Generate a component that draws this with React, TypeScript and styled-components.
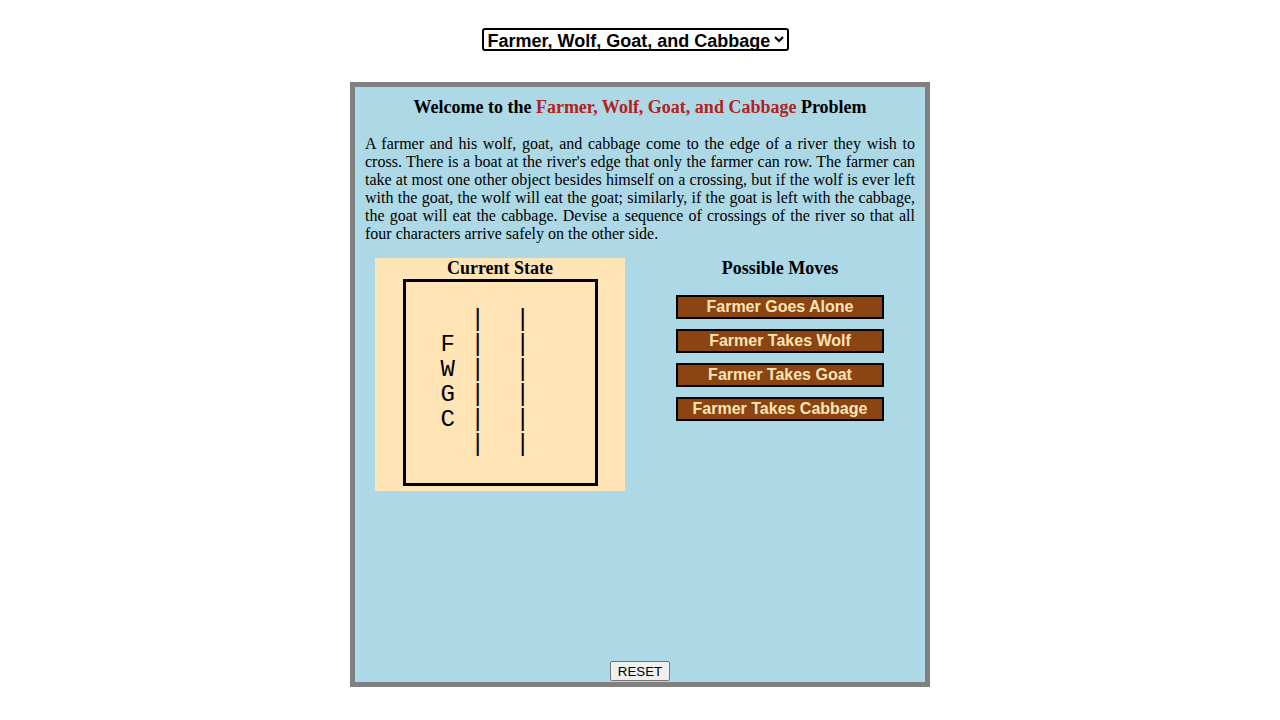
import React from "react";
import styled, { createGlobalStyle } from "styled-components";

const Global = createGlobalStyle`
  html, body { margin: 0; padding: 0; background: #ffffff; }
  body { font-family: "Liberation Serif", "Times New Roman", serif; }
`;

const Page = styled.div`
  padding-top: 28px;
  display: flex;
  flex-direction: column;
  align-items: center;
`;

const SelectRow = styled.div`
  display: flex;
  justify-content: center;
  width: 100%;
`;

const PuzzleSelect = styled.select`
  margin-right: 10px;
  font: bold 18px "Liberation Sans", Arial, sans-serif;
  color: #000;
  background: #fff;
  border: 2px solid #000;
  border-radius: 3px;
  height: 23px;
  padding: 0;
`;

const Panel = styled.div`
  margin-top: 31px;
  width: 580px;
  height: 605px;
  box-sizing: border-box;
  border: 5px solid #808080;
  background: #add8e6;
  padding: 10px 10px 1px 10px;
  display: flex;
  flex-direction: column;
`;

const Title = styled.h2`
  margin: 0;
  font: bold 18px/21px "Liberation Serif", "Times New Roman", serif;
  text-align: center;
  color: #000;
`;

const Accent = styled.span`
  color: #b22222;
`;

const Intro = styled.p`
  margin: 17px 0 15px;
  font: 16px/18px "Liberation Serif", "Times New Roman", serif;
  text-align: justify;
  color: #000;
`;

const Columns = styled.div`
  display: flex;
  align-items: flex-start;
`;

const StateCard = styled.div`
  margin-left: 10px;
  width: 250px;
  background: #ffe4b5;
  display: flex;
  flex-direction: column;
  align-items: center;
  padding-bottom: 5px;
`;

const SubTitle = styled.h3`
  margin: 0;
  font: bold 18px/21px "Liberation Serif", "Times New Roman", serif;
  text-align: center;
  color: #000;
`;

const RiverBox = styled.pre`
  margin: 0;
  width: 195px;
  height: 207px;
  box-sizing: border-box;
  border: 3px solid #000;
  padding: 0 0 0 35px;
  font: 24px/25px "Liberation Mono", "Courier New", monospace;
  letter-spacing: 0.6px;
  color: #000;
`;

const MovesColumn = styled.div`
  margin-left: 20px;
  width: 270px;
  display: flex;
  flex-direction: column;
  align-items: center;
`;

const MoveList = styled.div`
  margin-top: 16px;
  display: flex;
  flex-direction: column;
  gap: 10px;
`;

const MoveButton = styled.button`
  width: 208px;
  height: 24px;
  box-sizing: border-box;
  margin: 0;
  padding: 0;
  border: 2px solid #000;
  border-radius: 0;
  background: #8b4513;
  color: #ffe4b5;
  font: bold 16px/20px "Liberation Sans", Arial, sans-serif;
  text-align: center;
  cursor: pointer;
`;

const Footer = styled.div`
  margin-top: auto;
  display: flex;
  justify-content: center;
`;

const ResetButton = styled.button`
  font: 13.333px "Liberation Sans", Arial, sans-serif;
  color: #000;
  background: #efefef;
  border: 1px solid #767676;
  border-radius: 2px;
  width: 60px;
  height: 20px;
  padding: 0 6px;
`;

const riverText = [
  "",
  "  |  |",
  "F |  |",
  "W |  |",
  "G |  |",
  "C |  |",
  "  |  |",
  "",
].join("\n");

const moves = [
  "Farmer Goes Alone",
  "Farmer Takes Wolf",
  "Farmer Takes Goat",
  "Farmer Takes Cabbage",
];

export default function App() {
  return (
    <>
      <Global />
      <Page>
        <SelectRow>
          <PuzzleSelect defaultValue="fwgc">
            <option value="fwgc">Farmer, Wolf, Goat, and Cabbage</option>
          </PuzzleSelect>
        </SelectRow>
        <Panel>
          <Title>
            Welcome to the <Accent>Farmer, Wolf, Goat, and Cabbage</Accent> Problem
          </Title>
          <Intro>
            A farmer and his wolf, goat, and cabbage come to the edge of a river
            they wish to cross. There is a boat at the river's edge that only the
            farmer can row. The farmer can take at most one other object besides
            himself on a crossing, but if the wolf is ever left with the goat, the
            wolf will eat the goat; similarly, if the goat is left with the
            cabbage, the goat will eat the cabbage. Devise a sequence of crossings
            of the river so that all four characters arrive safely on the other
            side.
          </Intro>
          <Columns>
            <StateCard>
              <SubTitle>Current State</SubTitle>
              <RiverBox>{riverText}</RiverBox>
            </StateCard>
            <MovesColumn>
              <SubTitle>Possible Moves</SubTitle>
              <MoveList>
                {moves.map((m) => (
                  <MoveButton key={m}>{m}</MoveButton>
                ))}
              </MoveList>
            </MovesColumn>
          </Columns>
          <Footer>
            <ResetButton>RESET</ResetButton>
          </Footer>
        </Panel>
      </Page>
    </>
  );
}
